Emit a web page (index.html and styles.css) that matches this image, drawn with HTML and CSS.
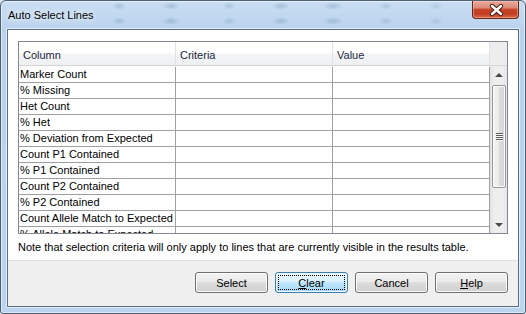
FILE: index.html
```html
<!DOCTYPE html>
<html lang="en">
<head>
    <meta charset="UTF-8">
    <title>Auto Select Lines</title>
    <link rel="stylesheet" href="styles.css">
</head>
<body>

    <div class="window">
        <div class="titlebar">
            <span class="title">Auto Select Lines</span>
            <button class="close" type="button">
                <svg width="47" height="18" viewBox="0 0 47 18">
                    <path d="M19 5 L28 13 M28 5 L19 13" stroke="#4a1f16" stroke-width="4.4" stroke-linecap="round" fill="none"/>
                    <path d="M19 5 L28 13 M28 5 L19 13" stroke="#ffffff" stroke-width="2.4" stroke-linecap="round" fill="none"/>
                </svg>
            </button>
        </div>

        <div class="client">
            <div class="main">
                <div class="grid">
                    <div class="grid-head">
                        <div class="hcell">Column</div>
                        <div class="hcell">Criteria</div>
                        <div class="hcell">Value</div>
                        <div class="hfill"></div>
                    </div>
                    <div class="grid-body">
                        <div class="rows">
                            <div class="row"><div class="cell">Marker Count</div><div class="cell"></div><div class="cell"></div></div>
                            <div class="row"><div class="cell">% Missing</div><div class="cell"></div><div class="cell"></div></div>
                            <div class="row"><div class="cell">Het Count</div><div class="cell"></div><div class="cell"></div></div>
                            <div class="row"><div class="cell">% Het</div><div class="cell"></div><div class="cell"></div></div>
                            <div class="row"><div class="cell">% Deviation from Expected</div><div class="cell"></div><div class="cell"></div></div>
                            <div class="row"><div class="cell">Count P1 Contained</div><div class="cell"></div><div class="cell"></div></div>
                            <div class="row"><div class="cell">% P1 Contained</div><div class="cell"></div><div class="cell"></div></div>
                            <div class="row"><div class="cell">Count P2 Contained</div><div class="cell"></div><div class="cell"></div></div>
                            <div class="row"><div class="cell">% P2 Contained</div><div class="cell"></div><div class="cell"></div></div>
                            <div class="row"><div class="cell">Count Allele Match to Expected</div><div class="cell"></div><div class="cell"></div></div>
                            <div class="row"><div class="cell">% Allele Match to Expected</div><div class="cell"></div><div class="cell"></div></div>
                        </div>
                        <div class="vscroll">
                            <div class="sbtn"><span class="arrow-up"></span></div>
                            <div class="thumb"><span class="grip"></span></div>
                            <div class="track"></div>
                            <div class="sbtn"><span class="arrow-down"></span></div>
                        </div>
                    </div>
                </div>
                <p class="note">Note that selection criteria will only apply to lines that are currently visible in the results table.</p>
            </div>

            <div class="footer">
                <button class="btn" type="button">Select</button>
                <button class="btn btn-focus" type="button"><u>C</u>lear</button>
                <button class="btn" type="button">Cancel</button>
                <button class="btn" type="button"><u>H</u>elp</button>
            </div>
        </div>
    </div>

</body>
</html>
```

FILE: styles.css
```css
* { box-sizing: border-box; }
html, body { margin: 0; padding: 0; }
body { width: 526px; height: 314px; overflow: hidden; background: #d6e2ee; font-family: "Liberation Sans", Arial, sans-serif; font-size: 11px; color: #000; }

/* window frame */
.window { width: 526px; height: 314px; display: flex; flex-direction: column; padding: 0 6px 6px; border: 1px solid #4f5f71; border-radius: 6px 6px 3px 3px; box-shadow: inset 0 0 0 1px rgba(255,255,255,0.5);
    background:
        radial-gradient(7px 4px at 118px 5px, rgba(70,100,140,0.22), transparent),
        radial-gradient(9px 4px at 170px 5px, rgba(70,100,140,0.25), transparent),
        radial-gradient(7px 4px at 228px 5px, rgba(70,100,140,0.2), transparent),
        radial-gradient(9px 4px at 280px 5px, rgba(70,100,140,0.25), transparent),
        radial-gradient(10px 4px at 332px 5px, rgba(70,100,140,0.25), transparent),
        radial-gradient(7px 4px at 385px 5px, rgba(70,100,140,0.18), transparent),
        radial-gradient(7px 4px at 435px 5px, rgba(70,100,140,0.15), transparent),
        radial-gradient(7px 4px at 118px 20px, rgba(70,100,140,0.22), transparent),
        radial-gradient(9px 4px at 170px 20px, rgba(70,100,140,0.25), transparent),
        radial-gradient(7px 4px at 228px 20px, rgba(70,100,140,0.2), transparent),
        radial-gradient(9px 4px at 280px 20px, rgba(70,100,140,0.25), transparent),
        radial-gradient(10px 4px at 332px 20px, rgba(70,100,140,0.25), transparent),
        radial-gradient(7px 4px at 385px 20px, rgba(70,100,140,0.18), transparent),
        radial-gradient(7px 4px at 435px 20px, rgba(70,100,140,0.15), transparent),
        linear-gradient(#c9def3, #bad3ed 28px, #bcd5ee);
}

.titlebar { height: 28px; display: flex; justify-content: space-between; align-items: flex-start; }
.title { padding: 7px 0 0 1px; line-height: 14px; font-size: 11px; text-shadow: 0 0 6px #fff, 0 0 10px rgba(255,255,255,0.8); }
.close { width: 47px; height: 18px; padding: 0; border: 1px solid #6a2617; border-top: none; border-radius: 0 0 4px 4px; box-shadow: inset 0 0 0 1px rgba(255,200,180,0.45);
    background: linear-gradient(#e9ab9d, #dc8a77 40%, #c7452a 50%, #c23d22 75%, #d86a4e); }
.close svg { display: block; }

/* client */
.client { flex: 1; display: flex; flex-direction: column; border: 1px solid #5b6e84; box-shadow: 0 0 0 1px rgba(255,255,255,0.55); background: #fff; }
.main { height: 230px; padding: 11px 10px 0; }

.grid { width: 490px; height: 193px; border: 1px solid #828790; display: flex; flex-direction: column; }
.grid-head { height: 24px; display: flex; border-bottom: 1px solid #d5d5d5; background: linear-gradient(#ffffff, #ffffff 45%, #f3f4f6 55%, #eff0f2); }
.hcell { width: 157px; padding: 4px 0 0 4px; line-height: 19px; color: #1c2a40; border-right: 1px solid #e1e3e7; }
.hfill { width: 17px; background: #ededed; }

.grid-body { flex: 1; display: flex; overflow: hidden; }
.rows { width: 471px; padding-top: 1px; overflow: hidden; }
.row { height: 16px; display: flex; border-bottom: 1px solid #a0a0a0; }
.cell { width: 157px; padding-left: 1px; line-height: 15px; white-space: nowrap; overflow: hidden; border-right: 1px solid #a0a0a0; }

/* scrollbar */
.vscroll { width: 17px; display: flex; flex-direction: column; background: linear-gradient(to right, #e2e2e2, #eeeeee 25%, #eeeeee 75%, #e6e6e6); }
.sbtn { height: 17px; display: flex; align-items: center; justify-content: center; }
.arrow-up { width: 0; height: 0; border-left: 4px solid transparent; border-right: 4px solid transparent; border-bottom: 4px solid #4a4a4a; }
.arrow-down { width: 0; height: 0; border-left: 4px solid transparent; border-right: 4px solid transparent; border-top: 4px solid #4a4a4a; }
.thumb { height: 103px; margin: 2px 1px 0 2px; display: flex; align-items: center; justify-content: center; border: 1px solid #989898; border-radius: 2px; box-shadow: inset 0 0 0 1px #fbfbfb;
    background: linear-gradient(to right, #f4f4f4, #e9e9e9 50%, #dcdcdc 50%, #d6d6d6); }
.grip { width: 7px; height: 8px; background: repeating-linear-gradient(#5c5c5c 0 1px, #f8f8f8 1px 2px); }
.track { flex: 1; }

.note { margin: 6px 0 0; line-height: 14px; }

/* buttons */
.footer { flex: 1; display: flex; justify-content: flex-end; gap: 7px; padding: 11px 10px 0; border-top: 1px solid #dfdfdf; background: #f0f0f0; }
.btn { width: 73px; height: 21px; padding: 0; font-family: "Liberation Sans", Arial, sans-serif; font-size: 11px; color: #000; border: 1px solid #707070; border-radius: 3px; box-shadow: inset 0 0 0 1px #fcfcfc;
    background: linear-gradient(#f2f2f2, #ebebeb 50%, #dddddd 50%, #cfcfcf); }
.btn-focus { border-color: #3c7fb1; box-shadow: inset 0 0 0 1px #f0f9fe; outline: 1px dotted #000; outline-offset: -4px;
    background: linear-gradient(#eaf6fd, #d9f0fc 50%, #bee6fd 50%, #a7d9f5); }
```
